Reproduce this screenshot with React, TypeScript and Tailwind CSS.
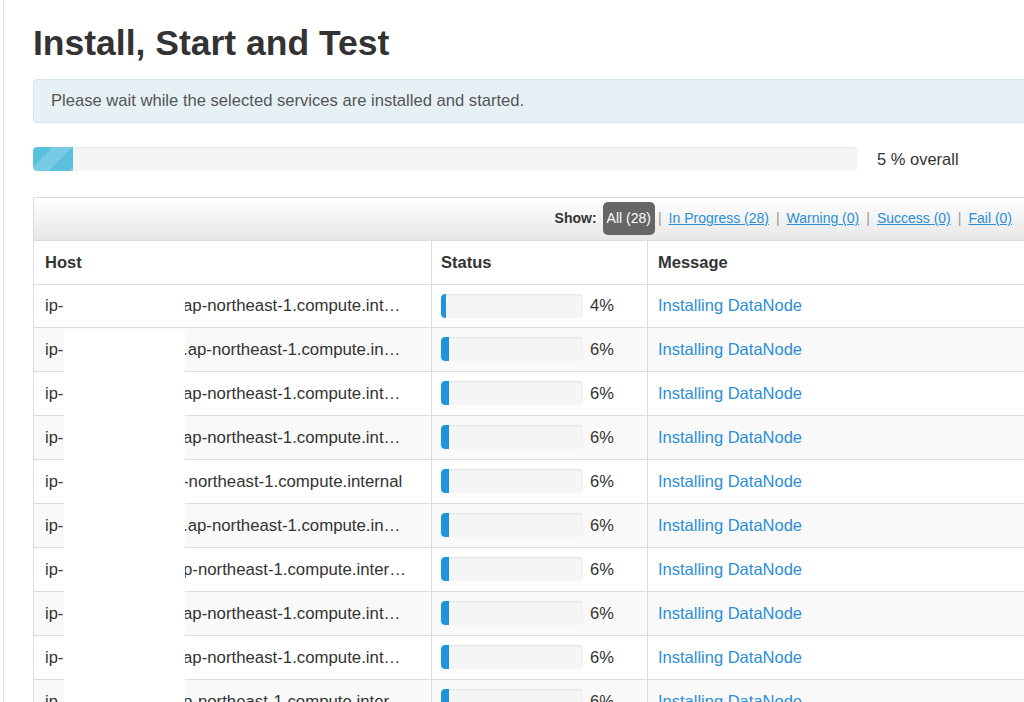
import React from "react";

type HostRow = { host: string; pct: number; message: string };

const rows: HostRow[] = [
  { host: "ap-northeast-1.compute.int…", pct: 4, message: "Installing DataNode" },
  { host: ".ap-northeast-1.compute.in…", pct: 6, message: "Installing DataNode" },
  { host: "ap-northeast-1.compute.int…", pct: 6, message: "Installing DataNode" },
  { host: "ap-northeast-1.compute.int…", pct: 6, message: "Installing DataNode" },
  { host: "-northeast-1.compute.internal", pct: 6, message: "Installing DataNode" },
  { host: ".ap-northeast-1.compute.in…", pct: 6, message: "Installing DataNode" },
  { host: "p-northeast-1.compute.inter…", pct: 6, message: "Installing DataNode" },
  { host: "ap-northeast-1.compute.int…", pct: 6, message: "Installing DataNode" },
  { host: "ap-northeast-1.compute.int…", pct: 6, message: "Installing DataNode" },
  { host: "p-northeast-1.compute.inter…", pct: 6, message: "Installing DataNode" },
  { host: "ap-northeast-1.compute.int…", pct: 6, message: "Installing DataNode" },
];

const filters = ["In Progress (28)", "Warning (0)", "Success (0)", "Fail (0)"];

function Sep() {
  return <span className="mx-[7px] text-[#999]">|</span>;
}

function RowBar({ pct }: { pct: number }) {
  return (
    <div className="h-[24px] w-[142px] overflow-hidden rounded-[4px] bg-[#f5f5f5] shadow-[inset_0_1px_2px_rgba(0,0,0,0.08)]">
      <div className="h-full rounded-l-[4px] bg-[#1d95dc]" style={{ width: `${pct * 1.3}px` }} />
    </div>
  );
}

export default function App() {
  return (
    <div className="h-[702px] w-[1024px] overflow-hidden bg-white font-['Liberation_Sans',Arial,sans-serif] text-[#333]">
      <div className="ml-[3px] h-full border-l border-[#e3e3e3] pl-[29px] pt-[23px]">
        <div className="w-[1000px]">
          <h1 className="text-[35.5px] font-bold leading-[40px] text-[#333]">Install, Start and Test</h1>

          <div className="mt-[16px] flex h-[44px] items-center rounded-[4px] border border-[#d5e3ea] bg-[#e6f1f6] px-[17px] text-[16.6px] text-[#555]">
            Please wait while the selected services are installed and started.
          </div>

          <div className="mt-[24px] flex items-center">
            <div className="h-[24px] w-[824px] overflow-hidden rounded-[4px] bg-[#f5f5f5] shadow-[inset_0_1px_2px_rgba(0,0,0,0.07)]">
              <div className="h-full w-[40px] rounded-l-[4px] bg-[#5bc0de] bg-[linear-gradient(-45deg,rgba(255,255,255,0.18)_25%,transparent_25%,transparent_50%,rgba(255,255,255,0.18)_50%,rgba(255,255,255,0.18)_75%,transparent_75%,transparent)] bg-[length:40px_40px]" />
            </div>
            <span className="ml-[20px] text-[16.5px] text-[#333]">5 % overall</span>
          </div>

          <div className="mt-[25px] border border-[#dcdcdc]">
            <div className="flex h-[43px] items-center justify-end border-b border-[#dcdcdc] bg-linear-to-b from-white to-[#e7e7e7] pr-[20px] text-[14px]">
              <span className="mr-[6px] font-bold text-[#333]">Show:</span>
              <span className="flex h-[33px] items-center rounded-[5px] bg-[#666] px-[4px] text-white">All (28)</span>
              <span className="ml-[3px] mr-[7px] text-[#999]">|</span>
              {filters.map((label, i) => (
                <React.Fragment key={label}>
                  {i > 0 && <Sep />}
                  <a href="#" className="text-[#2a8fd8] underline">
                    {label}
                  </a>
                </React.Fragment>
              ))}
            </div>

            <div className="grid h-[44px] grid-cols-[397px_216px_1fr] border-b border-[#dcdcdc] text-[16.5px] font-bold">
              <div className="flex items-center pl-[11px]">Host</div>
              <div className="flex items-center border-l border-[#dcdcdc] pl-[9px]">Status</div>
              <div className="flex items-center border-l border-[#dcdcdc] pl-[10px]">Message</div>
            </div>

            <div className="relative divide-y divide-[#dcdcdc] text-[16.5px]">
              {rows.map((r, i) => (
                <div
                  key={i}
                  className={`grid h-[44px] grid-cols-[397px_216px_1fr] first:h-[43px] ${i % 2 === 1 ? "bg-[#f9f9f9]" : "bg-white"}`}
                >
                  <div className="flex items-center overflow-hidden whitespace-nowrap pl-[11px]">
                    <span className="w-[138px] shrink-0">ip-</span>
                    <span className="text-[16.8px]">{r.host}</span>
                  </div>
                  <div className="flex items-center border-l border-[#dcdcdc] pl-[9px]">
                    <RowBar pct={r.pct} />
                    <span className="ml-[7px]">{r.pct}%</span>
                  </div>
                  <div className="flex items-center border-l border-[#dcdcdc] pl-[10px]">
                    <a href="#" className="text-[#2a8fd8]">
                      {r.message}
                    </a>
                  </div>
                </div>
              ))}
              {/* redacted host names */}
              <div className="absolute left-[30px] top-0 h-[43px] w-[121px] bg-white" />
              <div className="absolute bottom-0 left-[30px] top-[44px] w-[121px] bg-white" />
            </div>
          </div>
        </div>
      </div>
    </div>
  );
}
